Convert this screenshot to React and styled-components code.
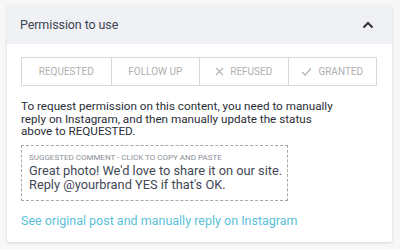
import React from "react";
import styled, { createGlobalStyle } from "styled-components";

const Global = createGlobalStyle`
  body {
    margin: 0;
    background: #f7f7f8;
    font-family: Roboto, "Open Sans", "Liberation Sans", sans-serif;
  }
`;

const statuses = [
  { id: "requested", label: "REQUESTED" },
  { id: "follow", label: "FOLLOW UP" },
  { id: "refused", label: "REFUSED", icon: "x" },
  { id: "granted", label: "GRANTED", icon: "check" },
];

const Icon = ({ kind }) =>
  kind === "x" ? (
    <svg width="9" height="9" viewBox="0 0 10 10">
      <path d="M1 1 L9 9 M9 1 L1 9" stroke="#aaa" strokeWidth="1.2" fill="none" />
    </svg>
  ) : (
    <svg width="11" height="9" viewBox="0 0 12 10">
      <path d="M1 5.5 L4.5 9 L11 1.5" stroke="#aaa" strokeWidth="1.2" fill="none" />
    </svg>
  );

const App = () => {
  return (
    <>
      <Global />
      <Page>
        <Card>
          <Header>
            <Title>Permission to use</Title>
            <svg width="12" height="8" viewBox="0 0 12 8">
              <path d="M1.5 6.5 L6 2 L10.5 6.5" stroke="#333" strokeWidth="2" fill="none" />
            </svg>
          </Header>
          <Body>
            <Segments>
              {statuses.map((s) => (
                <Segment key={s.id}>
                  {s.icon && <Icon kind={s.icon} />}
                  {s.label}
                </Segment>
              ))}
            </Segments>
            <Info>
              To request permission on this content, you need to manually
              <br />
              reply on Instagram, and then manually update the status
              <br />
              above to REQUESTED.
            </Info>
            <CommentBox>
              <CommentLabel>SUGGESTED COMMENT - CLICK TO COPY AND PASTE</CommentLabel>
              <CommentText>
                <div>Great photo! We'd love to share it on our site.</div>
                <div>Reply @yourbrand YES if that's OK.</div>
              </CommentText>
            </CommentBox>
            <Link>See original post and manually reply on Instagram</Link>
          </Body>
        </Card>
      </Page>
    </>
  );
};

export default App;

const Page = styled.div`
  width: 400px;
  height: 249px;
  padding: 5px 0 0 7px;
  box-sizing: border-box;
`;

const Card = styled.div`
  width: 385px;
  height: 237px;
  background: #fff;
  border-radius: 2px;
  box-shadow: 0 1px 3px rgba(0, 0, 0, 0.14);
  overflow: hidden;
`;

const Header = styled.div`
  height: 39px;
  background: #f0f1f5;
  display: flex;
  align-items: center;
  justify-content: space-between;
  padding: 0 18px 0 13px;
`;

const Title = styled.div`
  font-size: 12.5px;
  letter-spacing: -0.1px;
  color: #3c4352;
`;

const Body = styled.div`
  padding: 13px 15px 0 14px;
`;

const Segments = styled.div`
  display: grid;
  grid-template-columns: repeat(4, 1fr);
  border: 1px solid #d8d8d8;
  height: 29px;
  box-sizing: border-box;
`;

const Segment = styled.div`
  display: flex;
  align-items: center;
  justify-content: center;
  gap: 6px;
  font-size: 10px;
  color: #b0b0b0;
  & + & {
    border-left: 1px solid #d8d8d8;
  }
`;

const Info = styled.p`
  margin: 14px 0 0;
  font-size: 11.7px;
  line-height: 12.5px;
  color: #2a2e36;
`;

const CommentBox = styled.div`
  margin-top: 7px;
  width: 267px;
  height: 56px;
  box-sizing: border-box;
  border: 1px dashed #a8a8a8;
  padding: 6px 7px;
  cursor: pointer;
`;

const CommentLabel = styled.div`
  font-size: 8px;
  color: #8b8f97;
  line-height: 11px;
  white-space: nowrap;
`;

const CommentText = styled.div`
  margin-top: 1px;
  font-size: 12.8px;
  line-height: 14px;
  color: #444955;
  white-space: nowrap;
`;

const Link = styled.div`
  margin-top: 12px;
  font-size: 12.5px;
  color: #5bbfd8;
  cursor: pointer;
`;
